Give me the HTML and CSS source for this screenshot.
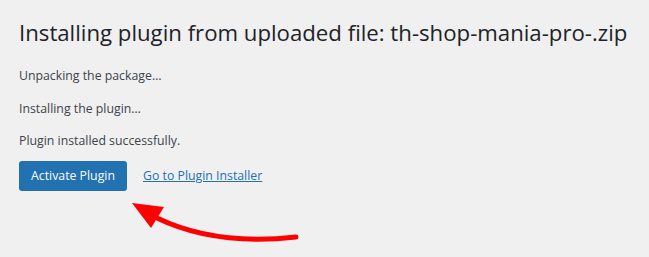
FILE: index.html
```html
<!DOCTYPE html>
<html>
<head>
<meta charset="utf-8">
<link rel="stylesheet" href="styles.css">
</head>
<body>
<div class="wrap">
  <h1 class="title">Installing plugin from uploaded file: th-shop-mania-pro-.zip</h1>
  <p class="msg">Unpacking the package…</p>
  <p class="msg">Installing the plugin…</p>
  <p class="msg">Plugin installed successfully.</p>
  <p class="actions">
    <a class="button" href="#">Activate Plugin</a>
    <a class="link" href="#">Go to Plugin Installer</a>
  </p>
  <svg class="arrow" width="200" height="60" viewBox="120 190 200 60">
    <path d="M157 218 Q215 246 296 237" fill="none" stroke="#ff0000" stroke-width="5" stroke-linecap="round"/>
    <polygon points="132,203 164,207 151,228" fill="#ff0000"/>
  </svg>
</div>
</body>
</html>
```
FILE: styles.css
```css
html, body {
  margin: 0;
  padding: 0;
  background: #f0f0f1;
}
body {
  width: 649px;
  height: 257px;
  overflow: hidden;
  font-family: "Open Sans", "Noto Sans", sans-serif;
  color: #3c434a;
  font-size: 12.3px;
}
.wrap {
  position: relative;
  padding: 0 19px;
  height: 257px;
}
.title {
  font-size: 22.2px;
  font-weight: 400;
  color: #1d2327;
  line-height: 29px;
  margin: 0;
  padding-top: 18px;
  white-space: nowrap;
}
.msg {
  margin: 0;
  line-height: 19.5px;
  margin-top: 13px;
}
.msg:first-of-type {
  margin-top: 19px;
}
.actions {
  margin: 10px 0 0;
  display: flex;
  align-items: center;
  gap: 16px;
}
.button {
  display: inline-flex;
  align-items: center;
  box-sizing: border-box;
  height: 30px;
  padding: 0 12px;
  background: #2271b1;
  color: #fff;
  border-radius: 3px;
  text-decoration: none;
  font-size: 12.3px;
}
.link {
  color: #2271b1;
  text-decoration: underline;
}
.arrow {
  position: absolute;
  left: 120px;
  top: 190px;
}
```
